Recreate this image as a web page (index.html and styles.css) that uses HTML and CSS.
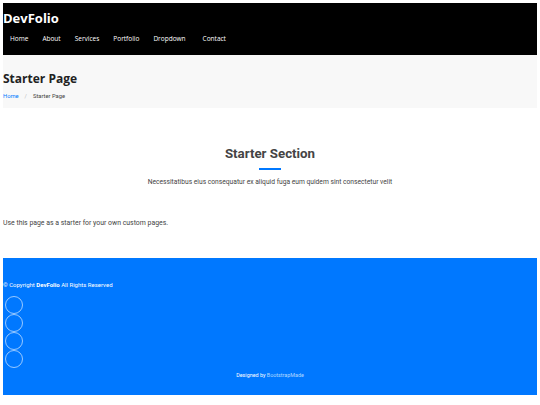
FILE: index.html
```html
<!DOCTYPE html>
<html lang="en">
<head>
<meta charset="UTF-8">
<meta name="viewport" content="width=device-width, initial-scale=1.0">
<title>Starter Page - DevFolio</title>
<link rel="stylesheet" href="styles.css">
</head>
<body>

<header class="header">
  <a class="logo" href="#">DevFolio</a>
  <nav class="navmenu">
    <a href="#">Home</a>
    <a href="#">About</a>
    <a href="#">Services</a>
    <a href="#">Portfolio</a>
    <a href="#">Dropdown</a>
    <a href="#" class="contact">Contact</a>
  </nav>
</header>

<main>
  <div class="page-title">
    <h1>Starter Page</h1>
    <div class="breadcrumbs">
      <a href="#">Home</a><span class="sep">/</span><span>Starter Page</span>
    </div>
  </div>

  <section class="starter">
    <div class="section-title">
      <h2>Starter Section</h2>
      <p>Necessitatibus eius consequatur ex aliquid fuga eum quidem sint consectetur velit</p>
    </div>
    <p class="intro">Use this page as a starter for your own custom pages.</p>
  </section>
</main>

<footer class="footer">
  <p class="copyright">© Copyright <strong>DevFolio</strong> All Rights Reserved</p>
  <div class="social">
    <a href="#"></a>
    <a href="#"></a>
    <a href="#"></a>
    <a href="#"></a>
  </div>
  <div class="credits">Designed by <a href="#">BootstrapMade</a></div>
</footer>

</body>
</html>
```

FILE: styles.css
```css
body {
  margin: 3px 3px 10px 3px;
  font-family: Roboto, "Liberation Sans", sans-serif;
  color: #444;
  background-color: #fff;
}
a {
  text-decoration: none;
}
.header {
  background-color: #000;
  height: 52px;
  display: flex;
  flex-direction: column;
}
.logo {
  font-family: "Open Sans", sans-serif;
  font-weight: 700;
  font-size: 13px;
  color: #fff;
  line-height: 16px;
  margin-top: 7px;
}
.navmenu {
  display: flex;
  margin-top: 8px;
}
.navmenu a {
  font-family: "Open Sans", sans-serif;
  font-size: 6.5px;
  color: #fff;
  padding: 0 7px;
  line-height: 10px;
}
.navmenu .contact {
  margin-left: 3px;
}
.page-title {
  background-color: #f8f8f8;
  height: 53px;
  padding-top: 16px;
  box-sizing: border-box;
}
.page-title h1 {
  font-family: "Open Sans", sans-serif;
  font-size: 12px;
  font-weight: 700;
  color: #222;
  margin: 0;
  line-height: 16px;
}
.breadcrumbs {
  font-size: 5.8px;
  color: #444;
  margin-top: 6px;
}
.breadcrumbs a {
  color: #0078ff;
}
.breadcrumbs .sep {
  color: #bbb;
  padding: 0 6px;
}
.starter {
  padding-top: 37px;
  height: 150px;
  box-sizing: border-box;
}
.section-title {
  text-align: center;
}
.section-title h2 {
  font-size: 13.3px;
  font-weight: 700;
  color: #444;
  margin: 0;
  line-height: 18px;
}
.section-title h2::after {
  content: "";
  display: block;
  width: 22px;
  height: 2px;
  background-color: #0078ff;
  margin: 5px auto 0;
}
.section-title p {
  font-size: 6.7px;
  margin: 8px 0 0;
}
.intro {
  font-size: 6.9px;
  margin: 33px 0 0;
}
.footer {
  background-color: #0078ff;
  height: 137px;
  color: #fff;
  padding-top: 22px;
  box-sizing: border-box;
}
.copyright {
  font-size: 6px;
  margin: 0;
  line-height: 10px;
}
.social {
  display: flex;
  flex-direction: column;
  padding-left: 2px;
  margin-top: 6px;
}
.social a {
  width: 16px;
  height: 16px;
  border: 1px solid rgba(255, 255, 255, 0.6);
  border-radius: 50%;
}
.credits {
  text-align: center;
  font-size: 5.4px;
  margin-top: 4px;
}
.credits a {
  color: #b3d8ff;
}
```
